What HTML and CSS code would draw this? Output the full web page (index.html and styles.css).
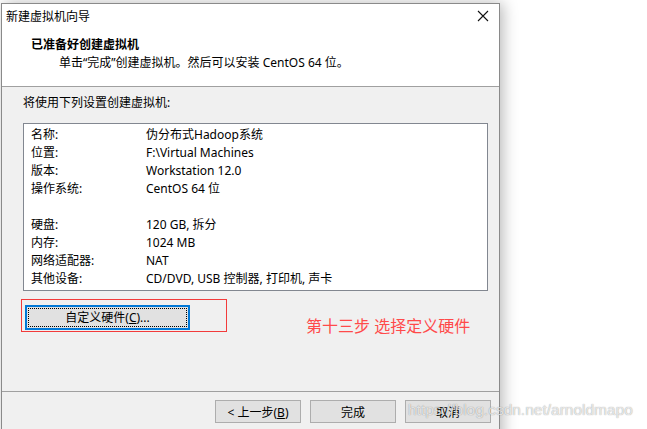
FILE: index.html
```html
<!DOCTYPE html>
<html lang="zh-CN">
<head>
    <meta charset="UTF-8">
    <title>新建虚拟机向导</title>
    <link rel="stylesheet" href="styles.css">
</head>
<body>
    <div class="dialog">
        <div class="titlebar">
            <span>新建虚拟机向导</span>
            <svg class="close" width="12" height="12" viewBox="0 0 12 12">
                <path d="M1 1L11 11M11 1L1 11" stroke="#111" stroke-width="1.1" fill="none"/>
            </svg>
        </div>
        <div class="header">
            <div class="header-title">已准备好创建虚拟机</div>
            <div class="header-sub">单击“完成”创建虚拟机。然后可以安装 CentOS 64 位。</div>
        </div>
        <div class="content">
            <p class="intro">将使用下列设置创建虚拟机:</p>
            <div class="listbox">
                <div class="row"><span class="key">名称:</span><span>伪分布式Hadoop系统</span></div>
                <div class="row"><span class="key">位置:</span><span>F:\Virtual Machines</span></div>
                <div class="row"><span class="key">版本:</span><span>Workstation 12.0</span></div>
                <div class="row"><span class="key">操作系统:</span><span>CentOS 64 位</span></div>
                <div class="row"></div>
                <div class="row"><span class="key">硬盘:</span><span>120 GB, 拆分</span></div>
                <div class="row"><span class="key">内存:</span><span>1024 MB</span></div>
                <div class="row"><span class="key">网络适配器:</span><span>NAT</span></div>
                <div class="row"><span class="key">其他设备:</span><span>CD/DVD, USB 控制器, 打印机, 声卡</span></div>
            </div>
            <div class="custom-row">
                <div class="highlight">
                    <button class="btn-focus"><span>自定义硬件(<u>C</u>)...</span></button>
                </div>
                <span class="note">第十三步 选择定义硬件</span>
            </div>
        </div>
        <div class="footer">
            <button class="btn">&lt; 上一步(<u>B</u>)</button>
            <button class="btn">完成</button>
            <button class="btn">取消</button>
        </div>
    </div>
    <div class="watermark">https://blog.csdn.net/arnoldmapo</div>
</body>
</html>
```

FILE: styles.css
```css
body {
    margin: 0;
    background: #fff;
    font-family: "Noto Sans", "Noto Sans CJK SC", sans-serif;
    font-size: 12px;
    color: #000;
    height: 429px;
    overflow: hidden;
    position: relative;
}
.dialog {
    width: 497px;
    height: 440px;
    margin: 3px 0 0 1px;
    border: 1px solid #8a8a8a;
    background: #f0f0f0;
    box-shadow: 3px 0 14px rgba(0, 0, 0, 0.28);
    display: flex;
    flex-direction: column;
}
.titlebar {
    height: 24px;
    background: #fff;
    display: flex;
    align-items: center;
    justify-content: space-between;
    padding: 0 10px 0 4px;
}
.close {
    display: block;
}
.header {
    height: 58px;
    background: #fff;
    border-bottom: 1px solid #a0a0a0;
    padding-left: 29px;
}
.header-title {
    font-weight: bold;
    line-height: 18px;
    padding-top: 8px;
}
.header-sub {
    line-height: 18px;
    padding-left: 28px;
}
.content {
    padding: 0 11px 0 21px;
    height: 304px;
}
.intro {
    margin: 0;
    line-height: 18px;
    padding-top: 7px;
}
.listbox {
    margin-top: 11px;
    height: 164px;
    border: 1px solid #828790;
    background: #fff;
    padding: 2px 0 0 7px;
}
.row {
    display: flex;
    height: 18px;
    line-height: 18px;
}
.key {
    width: 115px;
}
.custom-row {
    display: flex;
    align-items: flex-start;
    margin-top: 8px;
    margin-left: -2px;
}
.highlight {
    width: 206px;
    height: 33px;
    border: 1px solid #f23b3b;
    padding: 5px 0 0 3px;
    box-sizing: border-box;
}
.btn-focus {
    width: 165px;
    height: 25px;
    padding: 1px;
    border: 2px solid #0078d7;
    background: #e1e1e1;
    font: inherit;
    display: flex;
    box-sizing: border-box;
}
.btn-focus span {
    flex: 1;
    border: 1px dotted #000;
    line-height: 17px;
    text-align: center;
}
.note {
    margin-left: 79px;
    margin-top: 16px;
    font-size: 16px;
    line-height: 22px;
    color: #ff4a4a;
}
.footer {
    border-top: 1px solid #a0a0a0;
    display: flex;
    justify-content: flex-end;
    gap: 9px;
    padding: 8px 8px 0 0;
}
.btn {
    width: 86px;
    height: 23px;
    border: 1px solid #adadad;
    background: #e1e1e1;
    font: inherit;
    padding: 0;
}
.watermark {
    position: absolute;
    left: 408px;
    top: 401px;
    font-family: "Liberation Sans", Arial, sans-serif;
    font-size: 15.5px;
    color: rgba(255, 255, 255, 0.75);
    text-shadow: 0 0 1px rgba(0, 0, 0, 0.45);
}
```
